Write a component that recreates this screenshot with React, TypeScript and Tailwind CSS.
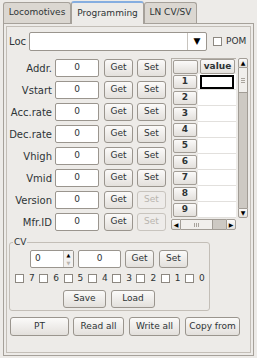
import type { ReactNode } from 'react';

const font = { fontFamily: '"DejaVu Sans", "Liberation Sans", sans-serif' };

function Btn({ w, h = 18, disabled = false, children }: { w: number; h?: number; disabled?: boolean; children: ReactNode }) {
  return (
    <div
      className={
        'flex items-center justify-center rounded-[3px] border shrink-0 ' +
        (disabled
          ? 'border-[#c8c4be] bg-[#eeecea] text-[#b9b5af]'
          : 'border-[#9a958e] bg-gradient-to-b from-[#fbfaf9] to-[#e3e0dc] text-[#2e3436]')
      }
      style={{ width: w, height: h }}
    >
      {children}
    </div>
  );
}

function Field({ w, children }: { w: number; children?: ReactNode }) {
  return (
    <div
      className="h-[18px] rounded-[2px] border border-[#9a958e] bg-white flex items-center justify-center shrink-0"
      style={{ width: w }}
    >
      {children}
    </div>
  );
}

function Check() {
  return <div className="w-[9px] h-[9px] border border-[#8d8881] bg-white shrink-0" />;
}

const rows: [string, boolean][] = [
  ['Addr.', false],
  ['Vstart', false],
  ['Acc.rate', false],
  ['Dec.rate', false],
  ['Vhigh', false],
  ['Vmid', false],
  ['Version', true],
  ['Mfr.ID', true],
];

function CvTable() {
  return (
    <div className="flex flex-col w-[77px] shrink-0">
      <div className="flex">
        <div className="w-[65px] h-[160px] border-l border-t border-[#b5b0a9] flex flex-col">
          <div className="flex h-[16px] items-center">
            <div className="w-[25px] h-[14px] ml-[1px] rounded-[2px] border border-[#a29d96] bg-gradient-to-b from-[#fbfaf9] to-[#e3e0dc]" />
            <div className="w-[35px] h-[15px] ml-[2px] rounded-[2px] border border-[#a29d96] bg-gradient-to-b from-[#fbfaf9] to-[#e3e0dc] flex items-center justify-center font-bold text-[9px] text-[#2e3436]">
              value
            </div>
          </div>
          {[1, 2, 3, 4, 5, 6, 7, 8, 9].map(n => (
            <div key={n} className="flex h-[16px]">
              <div className="w-[26px] h-[16px] flex items-center pl-[1px]">
                <div className="w-[24px] h-[14px] rounded-[2px] border border-[#a29d96] bg-gradient-to-b from-[#fbfaf9] to-[#e3e0dc] flex items-center justify-center font-bold text-[9px] text-[#2e3436]">
                  {n}
                </div>
              </div>
              <div className="w-[38px] h-[16px] bg-white border-b border-[#e2e0dd] flex items-center pl-[2px]">
                {n === 1 && <div className="w-[34px] h-[14px] border-2 border-black" />}
              </div>
            </div>
          ))}
        </div>
        <div className="w-[12px] h-[160px] pl-[2px] flex flex-col">
          <div className="h-[10px] rounded-t-[2px] border border-[#a29d96] bg-gradient-to-b from-[#fbfaf9] to-[#e3e0dc] flex items-center justify-center text-[6px] text-black leading-none">
            ▲
          </div>
          <div className="h-[25px] border-x border-b border-[#a29d96] bg-[#f1efec] flex flex-col items-center justify-center gap-[1px]">
            <div className="w-[4px] h-px bg-[#a9a49d]" />
            <div className="w-[4px] h-px bg-[#a9a49d]" />
            <div className="w-[4px] h-px bg-[#a9a49d]" />
          </div>
          <div className="flex-1 bg-[#cdc9c3] border-x border-[#a29d96]" />
          <div className="h-[10px] rounded-b-[2px] border border-[#a29d96] bg-gradient-to-b from-[#fbfaf9] to-[#e3e0dc] flex items-center justify-center text-[6px] text-black leading-none">
            ▼
          </div>
        </div>
      </div>
      <div className="flex h-[12px] pt-[1px]">
        <div className="w-[65px] h-[11px] flex">
          <div className="w-[10px] rounded-l-[2px] border border-[#a29d96] bg-gradient-to-b from-[#fbfaf9] to-[#e3e0dc] flex items-center justify-center text-[6px] text-black leading-none">
            ◀
          </div>
          <div className="w-[32px] border-y border-r border-[#a29d96] bg-[#f1efec] flex items-center justify-center gap-[1px]">
            <div className="w-px h-[4px] bg-[#a9a49d]" />
            <div className="w-px h-[4px] bg-[#a9a49d]" />
            <div className="w-px h-[4px] bg-[#a9a49d]" />
          </div>
          <div className="flex-1 bg-[#cdc9c3] border-y border-[#a29d96]" />
          <div className="w-[10px] rounded-r-[2px] border border-[#a29d96] bg-gradient-to-b from-[#fbfaf9] to-[#e3e0dc] flex items-center justify-center text-[6px] text-black leading-none">
            ▶
          </div>
        </div>
      </div>
    </div>
  );
}

export default function App() {
  return (
    <div className="w-[257px] h-[358px] bg-[#edebe8] text-[9px] text-[#2e3436] overflow-hidden" style={font}>
      {/* tabs */}
      <div className="flex items-end h-[24px] pl-[3px] pt-[1px] relative z-10">
        <div className="w-[68px] h-[21px] mb-[1px] rounded-t-[3px] border border-b-0 border-[#a6a19a] bg-[#dbd7d1] flex items-center justify-center">
          Locomotives
        </div>
        <div className="w-[73px] h-[23px] rounded-t-[3px] border border-b-0 border-[#a6a19a] border-t-2 border-t-[#86aee0] bg-[#edebe8] flex items-center justify-center">
          Programming
        </div>
        <div className="w-[53px] h-[21px] mb-[1px] rounded-t-[3px] border border-b-0 border-[#a6a19a] bg-[#dbd7d1] flex items-center justify-center">
          LN CV/SV
        </div>
      </div>
      {/* panel */}
      <div className="mx-[3px] -mt-px h-[333px] border border-[#a6a19a] p-[2px]">
        <div className="h-full border border-[#c3beb7] pt-[5px]">
          <div className="flex items-center h-[19px] pl-[2px]">
            <div className="w-[20px] text-[10px]">Loc</div>
            <div className="w-[178px] h-[19px] rounded-[2px] border border-[#9a958e] bg-white flex justify-end">
              <div className="w-[19px] h-full border-l border-[#c8c4be] flex items-center justify-center text-[9px] text-black">
                ▼
              </div>
            </div>
            <div className="ml-[6px]">
              <Check />
            </div>
            <div className="ml-[4px]">POM</div>
          </div>

          <div className="flex mt-[7px]">
            <div className="flex flex-col gap-[4px] pt-[1px] w-[164px]">
              {rows.map(([label, dis]) => (
                <div key={label} className="flex items-center h-[18px]">
                  <div className="w-[45px] text-right text-[10px] whitespace-nowrap">{label}</div>
                  <div className="ml-[3px]">
                    <Field w={44}>0</Field>
                  </div>
                  <div className="ml-[5px]">
                    <Btn w={29}>Get</Btn>
                  </div>
                  <div className="ml-[4px]">
                    <Btn w={29} disabled={dis}>Set</Btn>
                  </div>
                </div>
              ))}
            </div>
            <CvTable />
          </div>

          <fieldset className="ml-[2px] mt-[6px] w-[199px] h-[74px] border border-[#c3beb7] rounded-[3px]">
            <legend className="ml-[3px] px-[1px] leading-[11px]">CV</legend>
            <div className="flex items-center h-[18px] pl-[20px] mt-[2px]">
              <div className="w-[44px] h-[18px] rounded-[2px] border border-[#9a958e] bg-white flex">
                <div className="flex-1 flex items-center pl-[4px]">0</div>
                <div className="w-[10px] border-l border-[#c8c4be] flex flex-col text-[5px] leading-none">
                  <div className="flex-1 flex items-center justify-center bg-[#f3f1ef] text-black">▲</div>
                  <div className="flex-1 flex items-center justify-center bg-[#f3f1ef] text-[#b9b5af]">▼</div>
                </div>
              </div>
              <div className="ml-[4px]">
                <Field w={43}>0</Field>
              </div>
              <div className="ml-[4px]">
                <Btn w={29}>Get</Btn>
              </div>
              <div className="ml-[5px]">
                <Btn w={29}>Set</Btn>
              </div>
            </div>
            <div className="flex items-center h-[9px] mt-[6px] pl-[5px]">
              {['7', '6', '5', '4', '3', '2', '1', '0'].map(b => (
                <div key={b} className="flex items-center w-[24.3px] shrink-0">
                  <Check />
                  <span className="ml-[5px]">{b}</span>
                </div>
              ))}
            </div>
            <div className="flex mt-[7px] pl-[53px] gap-[5px]">
              <Btn w={43}>Save</Btn>
              <Btn w={44}>Load</Btn>
            </div>
          </fieldset>

          <div className="flex items-center mt-[6px] pl-[3px]">
            <Btn w={59} h={19}>PT</Btn>
            <div className="ml-[4px]">
              <Btn w={51} h={19}>Read all</Btn>
            </div>
            <div className="ml-[5px]">
              <Btn w={51} h={19}>Write all</Btn>
            </div>
            <div className="ml-[5px]">
              <Btn w={55} h={19}>Copy from</Btn>
            </div>
          </div>
        </div>
      </div>
    </div>
  );
}
